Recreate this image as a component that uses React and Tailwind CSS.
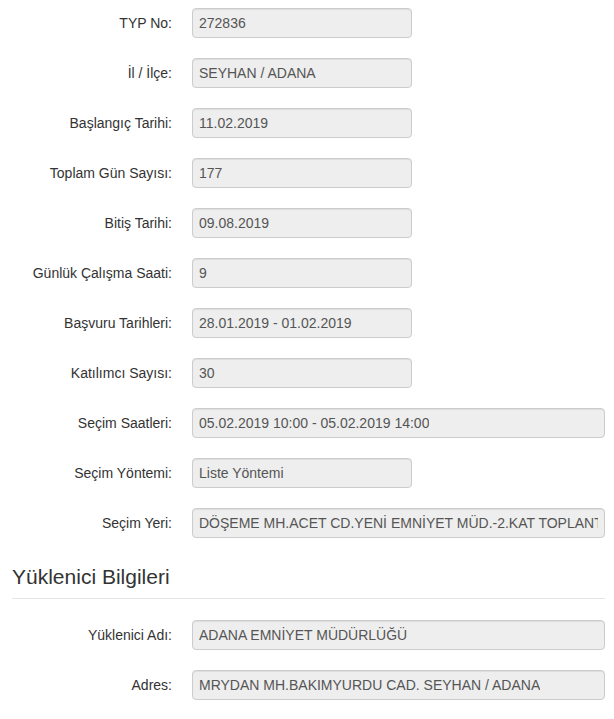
export default function App() {
  const font = { fontFamily: '"Liberation Sans", Arial, sans-serif' };
  const rows1 = [
    ["TYP No:", "272836", false],
    ["İl / İlçe:", "SEYHAN / ADANA", false],
    ["Başlangıç Tarihi:", "11.02.2019", false],
    ["Toplam Gün Sayısı:", "177", false],
    ["Bitiş Tarihi:", "09.08.2019", false],
    ["Günlük Çalışma Saati:", "9", false],
    ["Başvuru Tarihleri:", "28.01.2019 - 01.02.2019", false],
    ["Katılımcı Sayısı:", "30", false],
    ["Seçim Saatleri:", "05.02.2019 10:00 - 05.02.2019 14:00", true],
    ["Seçim Yöntemi:", "Liste Yöntemi", false],
    ["Seçim Yeri:", "DÖŞEME MH.ACET CD.YENİ EMNİYET MÜD.-2.KAT TOPLANTI SALONU", true],
  ];
  const rows2 = [
    ["Yüklenici Adı:", "ADANA EMNİYET MÜDÜRLÜĞÜ", true],
    ["Adres:", "MRYDAN MH.BAKIMYURDU CAD. SEYHAN / ADANA", true],
  ];
  const Row = ({ label, value, wide }) => (
    <div className="flex items-center gap-5">
      <div className="w-[172px] shrink-0 text-right text-[14px] text-[#333]">{label}</div>
      <div
        className={
          (wide ? "w-[413px] " : "w-[220px] ") +
          "h-[30px] shrink-0 flex items-center overflow-hidden whitespace-nowrap rounded-[4px] border border-[#ccc] bg-[#eee] px-[6px] text-[14px] text-[#555] shadow-[inset_0_1px_1px_rgba(0,0,0,0.075)]"
        }
      >
        <span className="block overflow-hidden whitespace-nowrap">{value}</span>
      </div>
    </div>
  );
  return (
    <div className="w-[614px] h-[719px] bg-white overflow-hidden" style={font}>
      <div className="pt-2 flex flex-col gap-5">
        {rows1.map(([l, v, w]) => (
          <Row key={l} label={l} value={v} wide={w} />
        ))}
      </div>
      <div className="mt-[27px] pl-3 pr-[9px]">
        <h3 className="text-[21px] leading-[23px] text-[#333]">Yüklenici Bilgileri</h3>
        <div className="mt-[10px] h-px bg-[#e5e5e5]" />
      </div>
      <div className="mt-[21px] flex flex-col gap-5">
        {rows2.map(([l, v, w]) => (
          <Row key={l} label={l} value={v} wide={w} />
        ))}
      </div>
    </div>
  );
}
